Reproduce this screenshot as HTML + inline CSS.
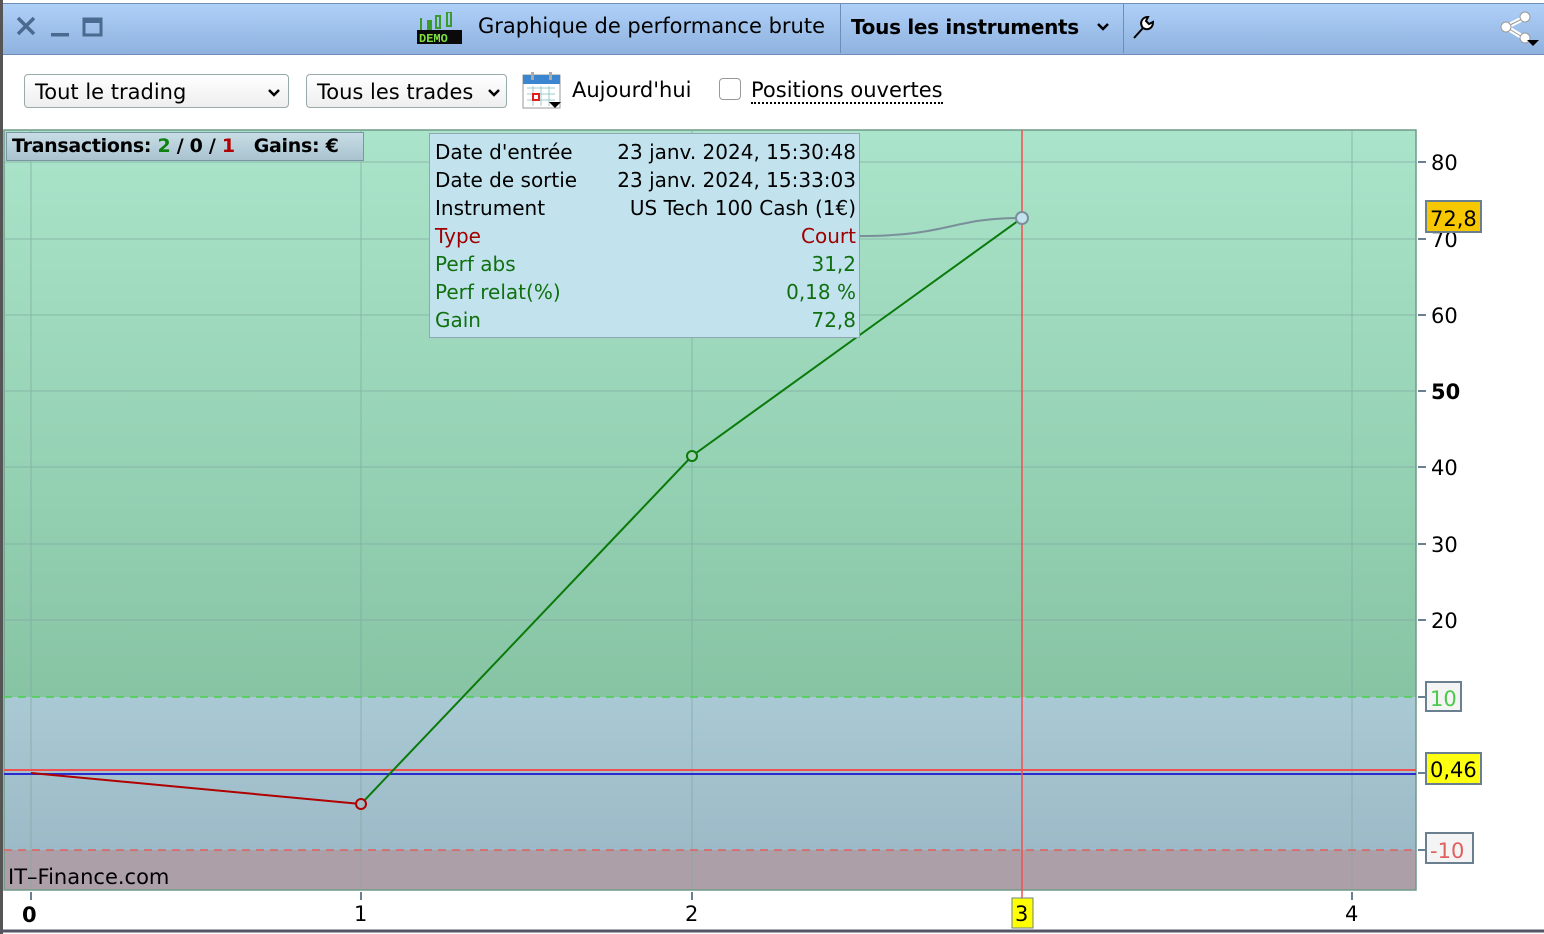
<!DOCTYPE html>
<html><head><meta charset="utf-8"><style>
body{margin:0;width:1544px;height:934px;background:#fff;font-family:"DejaVu Sans","Liberation Sans",sans-serif;overflow:hidden;position:relative}
.abs{position:absolute}
.tb{left:3px;top:3px;width:1541px;height:50px;background:linear-gradient(#aed0f8,#8fb2df);border-bottom:1px solid #6e8db8;border-top:1px solid #6e8db8}
.sel{position:absolute;top:74px;height:34px;border:1px solid #9aa;border-radius:4px;background:linear-gradient(#fff,#eee);font-size:21px;line-height:34px;padding-left:10px;box-sizing:border-box;white-space:nowrap}
.chev{position:absolute;top:12px}
.tip{left:429px;top:133px;width:431px;height:205px;background:#c2e3ee;border:1px solid #8fa7b4;font-size:20px;line-height:28px;box-sizing:border-box;padding:4px 3px 0 5px;white-space:nowrap}
.tip div{display:flex;justify-content:space-between}
</style></head><body>
<div class="abs" style="left:0;top:0;width:3px;height:934px;background:#555"></div>
<div class="abs tb"></div>
<svg class="abs" style="left:14px;top:14px" width="100" height="30"><path d="M4 4L20 20M20 4L4 20" stroke="#4a6a90" stroke-width="3.5"/><rect x="37" y="19" width="18" height="3.5" fill="#4a6a90"/><rect x="70" y="5" width="17" height="16" fill="none" stroke="#4a6a90" stroke-width="3"/><rect x="70" y="5" width="17" height="4" fill="#4a6a90"/></svg>
<svg class="abs" style="left:417px;top:12px" width="46" height="32"><rect x="3" y="6" width="2" height="12" fill="#3a9a2a"/><rect x="10" y="8" width="5" height="10" fill="#3a9a2a"/><rect x="19" y="4" width="4" height="12" fill="none" stroke="#3a9a2a" stroke-width="2"/><rect x="30" y="0" width="4" height="14" fill="none" stroke="#3a9a2a" stroke-width="2"/><rect x="0" y="18" width="45" height="14" fill="#0a0a0a"/><text x="2" y="30" font-size="12" font-weight="bold" fill="#7ee040" font-family="Liberation Mono">DEMO</text></svg>
<div class="abs" style="left:478px;top:14px;font-size:21px">Graphique de performance brute</div>
<div class="abs" style="left:840px;top:4px;width:1px;height:49px;background:#6e8db8"></div>
<div class="abs" style="left:851px;top:15px;font-size:20px;font-weight:bold;letter-spacing:-0.3px">Tous les instruments</div>
<svg class="abs" style="left:1095px;top:20px" width="16" height="14"><path d="M3 4l5 5 5-5" stroke="#000" stroke-width="2.5" fill="none"/></svg>
<div class="abs" style="left:1123px;top:4px;width:1px;height:49px;background:#6e8db8"></div>
<svg class="abs" style="left:1128px;top:12px" width="30" height="30"><path d="M6 26L15 16M15 16C11 11 14 5 20 5L18 9L21 12L25 10C25 16 20 19 15 16" fill="#fff" stroke="#000" stroke-width="2"/></svg>
<svg class="abs" style="left:1498px;top:8px" width="46" height="40"><path d="M8 19L26 10M8 19L26 30" stroke="#fff" stroke-width="5"/><path d="M8 19L26 10M8 19L26 30" stroke="#999" stroke-width="1"/><circle cx="8" cy="19" r="5" fill="#fff" stroke="#999"/><circle cx="27" cy="9" r="5" fill="#fff" stroke="#999"/><circle cx="27" cy="30" r="5" fill="#fff" stroke="#999"/><path d="M29 32h12l-6 6z" fill="#000"/></svg>
<div class="sel" style="left:24px;width:265px">Tout le trading<svg class="chev" style="right:6px" width="16" height="12"><path d="M3 3l5 5 5-5" stroke="#000" stroke-width="2.5" fill="none"/></svg></div>
<div class="sel" style="left:306px;width:201px">Tous les trades<svg class="chev" style="right:4px" width="16" height="12"><path d="M3 3l5 5 5-5" stroke="#000" stroke-width="2.5" fill="none"/></svg></div>
<svg class="abs" style="left:521px;top:70px" width="42" height="40"><rect x="2" y="5" width="37" height="33" fill="#fff" stroke="#999"/><rect x="2" y="5" width="37" height="9" fill="#3a86d0"/><rect x="10" y="2" width="3" height="8" fill="#aaa"/><rect x="28" y="2" width="3" height="8" fill="#aaa"/><path d="M6 18h28M6 24h28M6 30h28M12 16v20M20 16v20M28 16v20" stroke="#9cc" stroke-width="1"/><rect x="12" y="24" width="6" height="6" fill="none" stroke="#e02020" stroke-width="2"/><path d="M28 32h12l-6 6z" fill="#000"/></svg>
<div class="abs" style="left:572px;top:78px;font-size:21px">Aujourd'hui</div>
<div class="abs" style="left:719px;top:78px;width:22px;height:22px;border:1px solid #999;border-radius:4px;box-sizing:border-box"></div>
<div class="abs" style="left:751px;top:78px;font-size:21px;border-bottom:2px dotted #000;line-height:24px">Positions ouvertes</div>
<svg class="abs" style="left:0;top:0" width="1544" height="934">
<defs><linearGradient id="g" x1="0" y1="0" x2="0" y2="1"><stop offset="0" stop-color="#aae4ca"/><stop offset="1" stop-color="#87c4a4"/></linearGradient>
<linearGradient id="b" x1="0" y1="0" x2="0" y2="1"><stop offset="0" stop-color="#a9c9d4"/><stop offset="1" stop-color="#9cbac7"/></linearGradient></defs>
<rect x="4" y="130" width="1412" height="567" fill="url(#g)"/>
<rect x="4" y="697" width="1412" height="153" fill="url(#b)"/>
<rect x="4" y="850" width="1412" height="40" fill="#ad9fa8"/>
<rect x="4" y="130" width="1412" height="760" fill="none" stroke="#6f9a88" stroke-width="1.5"/>
<g stroke="#7fa8a0" stroke-width="1" opacity=".7">
<path d="M4 162H1416M4 239H1416M4 315H1416M4 391H1416M4 467H1416M4 544H1416M4 620H1416"/>
<path d="M31 130V890M361 130V890M692 130V890M1352 130V890"/></g>
<path d="M4 697H1416" stroke="#4cd04c" stroke-width="1.5" stroke-dasharray="8 6"/>
<path d="M4 850H1416" stroke="#e06060" stroke-width="1.5" stroke-dasharray="8 6"/>
<path d="M4 770H1416" stroke="#f05050" stroke-width="2"/>
<path d="M4 774H1416" stroke="#2a2ad0" stroke-width="2"/>
<path d="M1022 130V900" stroke="#f05050" stroke-width="1.5"/>
<path d="M31 773L361 804" stroke="#b00000" stroke-width="2" fill="none"/>
<path d="M361 804L692 456L1022 218" stroke="#0a7a0a" stroke-width="2" fill="none"/>
<path d="M860 236C950 236 950 218 1022 218" stroke="#7a8f9a" stroke-width="2" fill="none"/>
<circle cx="361" cy="804" r="5" fill="#a0bcc6" stroke="#b00000" stroke-width="2"/>
<circle cx="692" cy="456" r="5" fill="#9fd4b6" stroke="#0a7a0a" stroke-width="2"/>
<circle cx="1022" cy="218" r="6" fill="#c2e3ee" stroke="#7a8f9a" stroke-width="2"/>
<g stroke="#6a8090" stroke-width="2"><path d="M1418 162h8M1418 239h8M1418 315h8M1418 391h8M1418 467h8M1418 544h8M1418 620h8M1418 697h8M1418 773h8M1418 850h8M31 892v8M361 892v8M692 892v8M1352 892v8"/></g>
<g font-size="21" font-family="DejaVu Sans,sans-serif"><text x="1431" y="170">80</text><text x="1431" y="247">70</text><text x="1431" y="323">60</text><text x="1431" y="399" font-weight="bold">50</text><text x="1431" y="475">40</text><text x="1431" y="552">30</text><text x="1431" y="628">20</text>
<text x="22" y="922" font-weight="bold">0</text><text x="354" y="921">1</text><text x="685" y="921">2</text><text x="1345" y="921">4</text></g>
<rect x="1012" y="898" width="21" height="30" fill="#ffff00" stroke="#6a8090"/><text x="1015" y="921" font-size="21" font-family="DejaVu Sans">3</text>
<g font-family="DejaVu Sans,sans-serif" font-size="21">
<rect x="1426" y="201" width="55" height="31" fill="#f7c800" stroke="#6a8090" stroke-width="2"/><text x="1430" y="226">72,8</text>
<rect x="1426" y="682" width="35" height="29" fill="#f4f4f4" stroke="#6a8090" stroke-width="2"/><text x="1430" y="706" fill="#4cc84c">10</text>
<rect x="1426" y="753" width="55" height="31" fill="#ffff10" stroke="#6a8090" stroke-width="2"/><text x="1430" y="777">0,46</text>
<rect x="1426" y="833" width="47" height="30" fill="#f4f4f4" stroke="#6a8090" stroke-width="2"/><text x="1430" y="858" fill="#e06060">-10</text></g>
<path d="M0 931H1544" stroke="#556" stroke-width="3"/>
</svg>
<div class="abs" style="left:6px;top:132px;width:358px;height:29px;background:linear-gradient(#c8dde6,#a9c3cf);border:1px solid #7a95a4;box-sizing:border-box;font-size:19px;font-weight:bold;line-height:27px;padding-left:5px;white-space:nowrap;overflow:hidden;letter-spacing:-0.3px">Transactions: <span style="color:#108010">2</span> / 0 / <span style="color:#b00000">1</span> &nbsp; Gains: €</div>
<div class="abs" style="left:8px;top:865px;font-size:21px">IT–Finance.com</div>
<div class="abs tip">
<div><span>Date d'entrée</span><span>23 janv. 2024, 15:30:48</span></div>
<div><span>Date de sortie</span><span>23 janv. 2024, 15:33:03</span></div>
<div><span>Instrument</span><span>US Tech 100 Cash (1€)</span></div>
<div style="color:#a00000"><span>Type</span><span>Court</span></div>
<div style="color:#107010"><span>Perf abs</span><span>31,2</span></div>
<div style="color:#107010"><span>Perf relat(%)</span><span>0,18 %</span></div>
<div style="color:#107010"><span>Gain</span><span>72,8</span></div>
</div>
</body></html>
